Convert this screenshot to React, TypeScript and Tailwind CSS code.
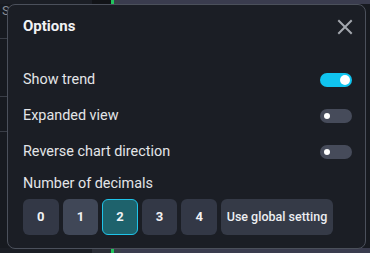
import React from "react";

function Toggle({ on }: { on: boolean }) {
  return on ? (
    <div className="relative h-[14px] w-[32px] rounded-full bg-[#10c4ef]">
      <div className="absolute right-[2px] top-[2px] h-[10px] w-[10px] rounded-full bg-white" />
    </div>
  ) : (
    <div className="relative h-[14px] w-[32px] rounded-full bg-[#464b5a]">
      <div className="absolute left-[4px] top-[4px] h-[6px] w-[6px] rounded-full bg-white" />
    </div>
  );
}

export default function App() {
  const rows: [string, boolean][] = [
    ["Show trend", true],
    ["Expanded view", false],
    ["Reverse chart direction", false],
  ];
  return (
    <div
      className="relative h-[253px] w-[370px] overflow-hidden bg-[#171a20]"
      style={{ fontFamily: "Roboto, 'Noto Sans', sans-serif" }}
    >
      {/* background bits */}
      <div className="absolute left-0 top-0 flex h-[4px] w-full">
        <div className="h-full w-[92px] bg-[#1b1e25]" />
        <div className="h-full w-[19px] bg-[#121418]" />
        <div className="h-full w-[3px] bg-[#22c55e]" />
        <div className="h-full w-[5px] bg-[#3a3f4a]" />
        <div className="h-full flex-1 bg-[#3a3c4e]" />
      </div>
      <div className="absolute bottom-0 left-0 flex h-[5px] w-full">
        <div className="h-full w-[92px] bg-[#1b1e25]" />
        <div className="h-full w-[19px] bg-[#2a2d36]" />
        <div className="h-full w-[3px] bg-[#22c55e]" />
        <div className="h-full w-[7px] bg-[#3a3f4a]" />
        <div className="h-full flex-1 bg-[#3a3c4e]" />
      </div>
      <div className="absolute left-[2px] top-[4px] text-[13px] leading-[14px] text-[#8a8f99]">S</div>
      <div className="absolute left-0 top-[38px] h-px w-[7px] bg-[#3a3e47]" />
      <div className="absolute left-0 top-[96px] h-px w-[7px] bg-[#3a3e47]" />
      <div className="absolute left-0 top-[131px] h-px w-[7px] bg-[#3a3e47]" />

      {/* modal */}
      <div className="absolute left-[7px] top-[4px] flex h-[245px] w-[359px] flex-col rounded-[8px] border border-[#4b505b] bg-[#1b1e25] pl-[15px] pr-[13px]">
        <div className="flex h-[43px] items-center justify-between">
          <span className="text-[15px] font-bold text-[#f1f2f4]">Options</span>
          <svg width="16" height="16" viewBox="0 0 16 16" className="mr-[-1px]">
            <path d="M2 2L14 14M14 2L2 14" stroke="#a3a7ae" strokeWidth="2" strokeLinecap="square" />
          </svg>
        </div>
        <div className="mt-[14px] flex flex-col">
          {rows.map(([label, on]) => (
            <div key={label} className="flex h-[36px] items-center justify-between">
              <span className="text-[14.4px] text-[#e3e5e8]">{label}</span>
              <Toggle on={on} />
            </div>
          ))}
        </div>
        <div className="mt-[4px] flex h-[20px] items-center text-[14.4px] text-[#e3e5e8]">Number of decimals</div>
        <div className="mt-[5px] flex gap-[4px]">
          {["0", "1", "2", "3", "4"].map((d) => (
            <div
              key={d}
              className={
                d === "2"
                  ? "flex h-[36px] w-[35.6px] items-center justify-center rounded-[6px] border border-[#1fc3e8] bg-[#1e626c] text-[13px] font-bold text-[#f1f2f4]"
                  : d === "1"
                  ? "flex h-[36px] w-[35.6px] items-center justify-center rounded-[6px] bg-[#404757] text-[13px] font-bold text-[#f1f2f4]"
                  : "flex h-[36px] w-[35.6px] items-center justify-center rounded-[6px] bg-[#333846] text-[13px] font-bold text-[#f1f2f4]"
              }
            >
              {d}
            </div>
          ))}
          <div className="flex h-[36px] w-[112px] items-center justify-center whitespace-nowrap rounded-[6px] bg-[#353a47] text-[12.5px] font-medium text-[#eceef1]">
            Use global setting
          </div>
        </div>
      </div>
    </div>
  );
}
